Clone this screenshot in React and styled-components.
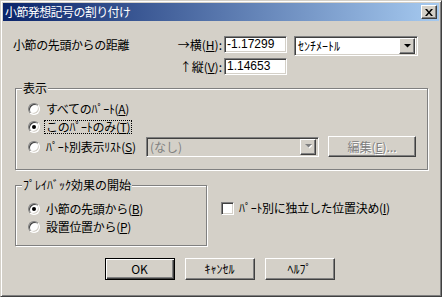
import React from "react";
import styled, { createGlobalStyle, css } from "styled-components";

const face = "#d4d0c8";

const GlobalStyle = createGlobalStyle`
  body {
    margin: 0;
    background: ${face};
  }
  * {
    box-sizing: border-box;
  }
`;

const raised = css`
  border: 1px solid;
  border-color: #fff #404040 #404040 #fff;
  box-shadow: inset -1px -1px #808080, inset 1px 1px ${face};
`;

const sunken = css`
  border: 1px solid;
  border-color: #808080 #fff #fff #808080;
  box-shadow: inset 1px 1px #404040, inset -1px -1px ${face};
`;

function Dialog() {
  return (
    <Window>
      <TitleBar>
        <TitleText>小節発想記号の割り付け</TitleText>
        <CloseButton>
          <svg width="8" height="7" viewBox="0 0 8 7">
            <path d="M0 0h2l2 2.5L6 0h2L5 3.5 8 7H6L4 4.5 2 7H0l3-3.5z" fill="#000" />
          </svg>
        </CloseButton>
      </TitleBar>

      <Body>
        <TopGrid>
          <FieldLabel>小節の先頭からの距離</FieldLabel>
          <AxisLabel>
            →横(<U>H</U>):
          </AxisLabel>
          <TextInput>-1.17299</TextInput>
          <Select>
            <SelectText>ｾﾝﾁﾒｰﾄﾙ</SelectText>
            <DropButton>
              <Arrow />
            </DropButton>
          </Select>
          <span />
          <AxisLabel>
            ↑縦(<U>V</U>):
          </AxisLabel>
          <TextInput>1.14653</TextInput>
        </TopGrid>

        <GroupBox $width={413} $pad="10px 9px 12px 12px" $top={13}>
          <Legend>表示</Legend>
          <RadioRow $h={19}>
            <Radio />
            <RadioText>
              すべてのﾊﾟｰﾄ(<U>A</U>)
            </RadioText>
          </RadioRow>
          <RadioRow $h={18}>
            <Radio $checked />
            <RadioText $focused>
              このﾊﾟｰﾄのみ(<U>T</U>)
            </RadioText>
          </RadioRow>
          <RadioRow $h={21}>
            <Radio />
            <RadioText $fixed={102}>
              ﾊﾟｰﾄ別表示ﾘｽﾄ(<U>S</U>)
            </RadioText>
            <Select $disabled $width={173}>
              <SelectText $disabled>(なし)</SelectText>
              <DropButton>
                <Arrow $disabled />
              </DropButton>
            </Select>
            <EditButton $disabled $width={88} $height={21}>
              編集(<U>E</U>)...
            </EditButton>
          </RadioRow>
        </GroupBox>

        <MidRow>
          <GroupBox $width={192} $pad="14px 8px 9px 12px" $top={15}>
            <Legend>ﾌﾟﾚｲﾊﾞｯｸ効果の開始</Legend>
            <RadioRow $h={18}>
              <Radio $checked />
              <RadioText>
                小節の先頭から(<U>B</U>)
              </RadioText>
            </RadioRow>
            <RadioRow $h={18}>
              <Radio />
              <RadioText>
                設置位置から(<U>P</U>)
              </RadioText>
            </RadioRow>
          </GroupBox>
          <CheckRow>
            <CheckBox />
            <span>
              ﾊﾟｰﾄ別に独立した位置決め(<U>I</U>)
            </span>
          </CheckRow>
        </MidRow>

        <Footer>
          <PushButton $default $width={70} $height={22}>
            OK
          </PushButton>
          <PushButton $width={70} $height={22}>
            ｷｬﾝｾﾙ
          </PushButton>
          <PushButton $width={70} $height={22}>
            ﾍﾙﾌﾟ
          </PushButton>
        </Footer>
      </Body>
    </Window>
  );
}

function Arrow({ $disabled }) {
  return (
    <svg width="8" height="5" viewBox="0 0 8 5">
      {$disabled && <path d="M2 1h7L5.5 4.5z" fill="#fff" />}
      <path d="M1 0h7L4.5 3.5z" fill={$disabled ? "#808080" : "#000"} />
    </svg>
  );
}

const Window = styled.div`
  width: 442px;
  height: 297px;
  background: ${face};
  border: 1px solid;
  border-color: ${face} #404040 #404040 ${face};
  box-shadow: inset 1px 1px #fff, inset -1px -1px #808080;
  padding: 2px;
  display: flex;
  flex-direction: column;
  font-family: "Noto Sans CJK JP", "Noto Sans", sans-serif;
  font-size: 12px;
  line-height: 14px;
  color: #000;
`;

const TitleBar = styled.div`
  height: 18px;
  flex: none;
  display: flex;
  align-items: center;
  justify-content: space-between;
  padding: 0 2px 0 2px;
  background: linear-gradient(to right, #0a246a, #a6caf0);
`;

const TitleText = styled.span`
  color: #fff;
  letter-spacing: -0.6px;
`;

const CloseButton = styled.div`
  width: 16px;
  height: 14px;
  background: ${face};
  ${raised};
  display: flex;
  align-items: center;
  justify-content: center;
`;

const Body = styled.div`
  flex: 1;
  display: flex;
  flex-direction: column;
  padding: 15px 11px 0 10px;
`;

const TopGrid = styled.div`
  display: grid;
  grid-template-columns: 168px 43px 70px 124px;
  grid-template-rows: 20px 17px;
  row-gap: 2px;
`;

const FieldLabel = styled.span`
  align-self: start;
  line-height: 17px;
  letter-spacing: -0.4px;
`;

const AxisLabel = styled.span`
  align-self: start;
  justify-self: end;
  padding-right: 2px;
  line-height: 17px;
  white-space: nowrap;
`;

const U = styled.span`
  text-decoration: underline;
`;

const TextInput = styled.div`
  align-self: start;
  width: 63px;
  height: 17px;
  background: #fff;
  ${sunken};
  padding: 0 2px;
  line-height: 15px;
  font-family: "Liberation Sans", sans-serif;
  font-size: 12px;
`;

const Select = styled.div`
  width: ${(p) => p.$width || 124}px;
  height: 20px;
  background: ${(p) => (p.$disabled ? face : "#fff")};
  ${sunken};
  display: flex;
  align-items: center;
  padding: 2px;
`;

const SelectText = styled.span`
  flex: 1;
  padding-left: 1px;
  color: ${(p) => (p.$disabled ? "#808080" : "#000")};
  white-space: nowrap;
`;

const DropButton = styled.div`
  flex: none;
  width: 16px;
  height: 16px;
  background: ${face};
  ${raised};
  display: flex;
  align-items: center;
  justify-content: center;
`;

const GroupBox = styled.div`
  position: relative;
  width: ${(p) => p.$width}px;
  margin-top: ${(p) => p.$top}px;
  margin-left: 2px;
  border: 1px solid #808080;
  box-shadow: inset 1px 1px #fff, 1px 1px #fff;
  padding: ${(p) => p.$pad};
  display: flex;
  flex-direction: column;
`;

const Legend = styled.span`
  position: absolute;
  top: -8px;
  left: 6px;
  padding: 0 1px;
  background: ${face};
  white-space: nowrap;
`;

const RadioRow = styled.div`
  height: ${(p) => p.$h}px;
  display: flex;
  align-items: center;
`;

const Radio = styled.span`
  position: relative;
  flex: none;
  width: 12px;
  height: 12px;
  border-radius: 50%;
  background: #fff;
  border: 1px solid;
  border-color: #808080 #fff #fff #808080;
  box-shadow: inset 1px 1px #404040, inset -1px -1px ${face};
  margin-right: 4px;

  &::after {
    content: "";
    display: ${(p) => (p.$checked ? "block" : "none")};
    position: absolute;
    left: 3px;
    top: 3px;
    width: 4px;
    height: 4px;
    border-radius: 50%;
    background: #000;
  }
`;

const RadioText = styled.span`
  flex: ${(p) => (p.$fixed ? `0 0 ${p.$fixed}px` : "none")};
  padding: 0 1px;
  border: 1px ${(p) => (p.$focused ? "dotted #000" : "solid transparent")};
  line-height: 12px;
  white-space: nowrap;
  letter-spacing: -0.3px;
`;

const MidRow = styled.div`
  display: flex;
  align-items: flex-start;
`;

const CheckRow = styled.div`
  display: flex;
  align-items: center;
  margin-top: 31px;
  margin-left: 14px;
  gap: 5px;
  white-space: nowrap;
  letter-spacing: -0.3px;
`;

const CheckBox = styled.span`
  flex: none;
  width: 13px;
  height: 13px;
  background: #fff;
  ${sunken};
`;

const Footer = styled.div`
  display: flex;
  justify-content: center;
  gap: 10px;
  margin-top: 12px;
  margin-left: -2px;
`;

const PushButton = styled.div`
  width: ${(p) => p.$width}px;
  height: ${(p) => p.$height}px;
  flex: none;
  display: flex;
  align-items: center;
  justify-content: center;
  background: ${face};
  white-space: nowrap;
  ${(p) =>
    p.$default
      ? css`
          border: 1px solid #000;
          box-shadow: inset 1px 1px #fff, inset -1px -1px #404040,
            inset -2px -2px #808080;
        `
      : raised};
  ${(p) =>
    p.$disabled &&
    css`
      color: #808080;
      text-shadow: 1px 1px 0 #fff;
    `};
`;

const EditButton = styled(PushButton)`
  margin-left: 9px;
`;

export default function App() {
  return (
    <>
      <GlobalStyle />
      <Dialog />
    </>
  );
}
